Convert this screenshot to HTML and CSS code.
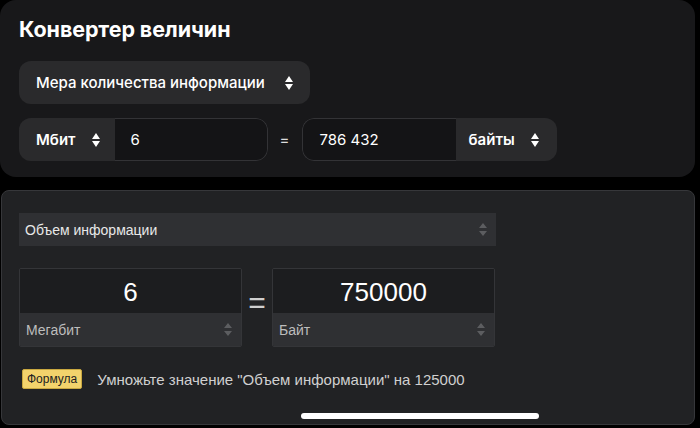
FILE: index.html
```html
<!DOCTYPE html>
<html lang="ru">
<head>
    <meta charset="UTF-8">
    <title>Конвертер величин</title>
    <link rel="stylesheet" href="styles.css">
</head>
<body>
    <div class="top">
        <h1>Конвертер величин</h1>

        <div class="measure">
            <span>Мера количества информации</span>
            <svg class="arrows" width="8" height="14" viewBox="0 0 8 14"><path d="M4 0L8 6H0Z M0 8H8L4 14Z" fill="#fff"/></svg>
        </div>

        <div class="row">
            <div class="field">
                <div class="unit">
                    <span>Мбит</span>
                    <svg class="arrows" width="8" height="14" viewBox="0 0 8 14"><path d="M4 0L8 6H0Z M0 8H8L4 14Z" fill="#fff"/></svg>
                </div>
                <div class="value">6</div>
            </div>
            <div class="eq">=</div>
            <div class="field">
                <div class="value">786 432</div>
                <div class="unit unit-right">
                    <span>байты</span>
                    <svg class="arrows" width="8" height="14" viewBox="0 0 8 14"><path d="M4 0L8 6H0Z M0 8H8L4 14Z" fill="#fff"/></svg>
                </div>
            </div>
        </div>
    </div>

    <div class="bottom">
        <div class="select">
            <span>Объем информации</span>
            <svg width="8" height="13" viewBox="0 0 8 13"><path d="M4 0L8 5H0Z M0 8H8L4 13Z" fill="#5c5d60"/></svg>
        </div>

        <div class="conv">
            <div class="box">
                <div class="num">6</div>
                <div class="box-unit">
                    <span>Мегабит</span>
                    <svg width="8" height="13" viewBox="0 0 8 13"><path d="M4 0L8 5H0Z M0 8H8L4 13Z" fill="#5c5d60"/></svg>
                </div>
            </div>
            <div class="big-eq">=</div>
            <div class="box">
                <div class="num">750000</div>
                <div class="box-unit">
                    <span>Байт</span>
                    <svg width="8" height="13" viewBox="0 0 8 13"><path d="M4 0L8 5H0Z M0 8H8L4 13Z" fill="#5c5d60"/></svg>
                </div>
            </div>
        </div>

        <div class="formula">
            <span class="badge">Формула</span>
            <span class="formula-text">Умножьте значение "Объем информации" на 125000</span>
        </div>

        <div class="home-bar"></div>
    </div>
</body>
</html>
```

FILE: styles.css
```css
body {
    margin: 0;
    background: #000;
    width: 700px;
    height: 428px;
    overflow: hidden;
}
.top {
    width: 695px;
    height: 177px;
    box-sizing: border-box;
    padding: 14px 19px 0;
    background: #18181a;
    border-radius: 16px;
    font-family: Inter, "Noto Sans", sans-serif;
    color: #fff;
}
h1 {
    margin: 0 0 16px;
    font-size: 21.5px;
    font-weight: 700;
    line-height: 31px;
    letter-spacing: -0.1px;
}
.measure {
    display: inline-flex;
    align-items: center;
    gap: 20px;
    height: 43px;
    padding: 0 17px 0 17px;
    background: #2a2a2c;
    border-radius: 12px;
    font-size: 15px;
    font-weight: 500;
}
.arrows {
    display: block;
}
.row {
    display: flex;
    align-items: center;
    margin-top: 14px;
}
.field {
    display: flex;
    height: 43px;
    border-radius: 12px;
    overflow: hidden;
}
.unit {
    display: flex;
    align-items: center;
    gap: 16px;
    padding: 0 15px 0 17px;
    background: #2a2a2c;
    font-size: 15px;
    font-weight: 600;
}
.unit-right {
    padding-left: 13px;
    padding-right: 18px;
}
.value {
    display: flex;
    align-items: center;
    width: 153px;
    box-sizing: border-box;
    padding-left: 16px;
    background: #141416;
    border: 1px solid #333336;
    font-size: 15px;
}
.field:first-child .value {
    border-left: none;
    border-radius: 0 12px 12px 0;
}
.field:last-child .value {
    width: 154px;
    padding-left: 17px;
    border-right: none;
    border-radius: 12px 0 0 12px;
}
.eq {
    width: 34px;
    text-align: center;
    font-size: 15px;
    color: #ddd;
}
.bottom {
    position: relative;
    margin: 13px 0 0 1px;
    width: 694px;
    height: 235px;
    box-sizing: border-box;
    padding: 22px 18px 0 17px;
    background: #212224;
    border: 1px solid #36373a;
    border-radius: 8px;
    font-family: "Liberation Sans", Arial, sans-serif;
}
.select {
    display: flex;
    justify-content: space-between;
    align-items: center;
    width: 477px;
    height: 33px;
    box-sizing: border-box;
    padding: 0 9px 0 6px;
    background: #2f3033;
    font-size: 14px;
    color: #e8e8e8;
}
.conv {
    display: flex;
    align-items: center;
    margin-top: 22px;
}
.box {
    width: 223px;
    box-sizing: border-box;
    border: 1px solid #343538;
    border-radius: 2px;
    overflow: hidden;
}
.num {
    height: 44px;
    line-height: 46px;
    background: #1c1d1f;
    text-align: center;
    font-size: 26px;
    color: #fff;
}
.box-unit {
    display: flex;
    justify-content: space-between;
    align-items: center;
    height: 33px;
    padding: 0 9px 0 6px;
    background: #2f3033;
    font-size: 14px;
    color: #bdbdbd;
}
.big-eq {
    width: 30px;
    text-align: center;
    font-size: 30px;
    color: #cfcfcf;
    margin-top: -10px;
}
.formula {
    display: flex;
    align-items: center;
    gap: 15px;
    margin-top: 22px;
    padding-left: 3px;
}
.badge {
    padding: 2px 4px;
    background: #f3d36c;
    border: 1px solid #c9a840;
    border-radius: 2px;
    font-size: 12px;
    color: #222;
}
.formula-text {
    font-size: 15px;
    color: #d0d0d0;
}
.home-bar {
    position: absolute;
    left: 299px;
    top: 222px;
    width: 238px;
    height: 6px;
    border-radius: 3px;
    background: #fff;
}
```
